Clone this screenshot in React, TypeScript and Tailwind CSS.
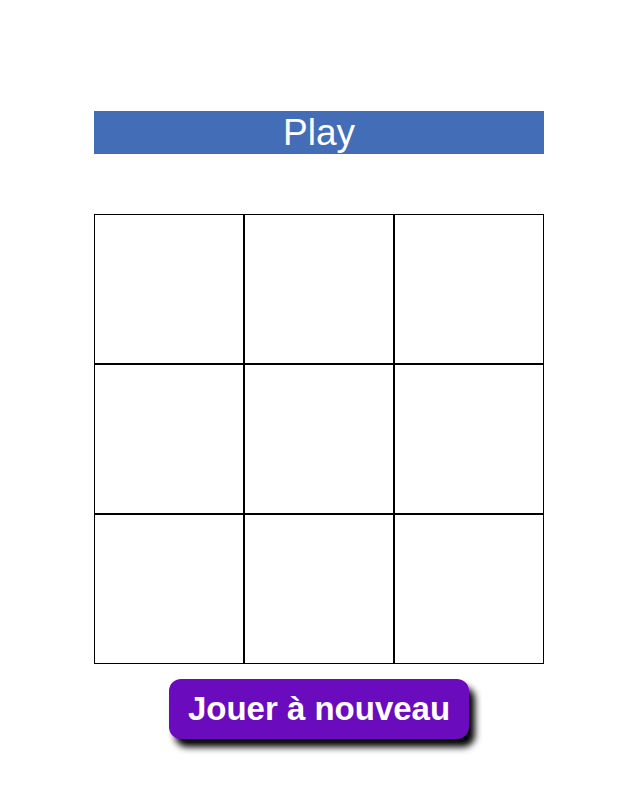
import React from "react";

export default function App() {
  const cells = Array.from({ length: 9 });
  return (
    <div className="min-h-[808px] bg-white" style={{ fontFamily: '"Liberation Sans", Arial, sans-serif' }}>
      <div className="ml-[94px] w-[450px] pt-[111px] flex flex-col items-center">
        <div className="w-[450px] h-[43px] bg-[#436eb7] text-white text-[37px] leading-[43px] text-center">Play</div>
        <div className="mt-[60px] grid grid-cols-[repeat(3,150px)] grid-rows-[repeat(3,150px)]">
          {cells.map((_, i) => (
            <div key={i} className="border border-black bg-white" />
          ))}
        </div>
        <button className="mt-[15px] w-[300px] h-[60px] rounded-[12px] bg-[#6a0bbd] text-white font-bold text-[33px] leading-[58px] shadow-[6px_8px_7px_#000000]">
          Jouer à nouveau
        </button>
      </div>
    </div>
  );
}
